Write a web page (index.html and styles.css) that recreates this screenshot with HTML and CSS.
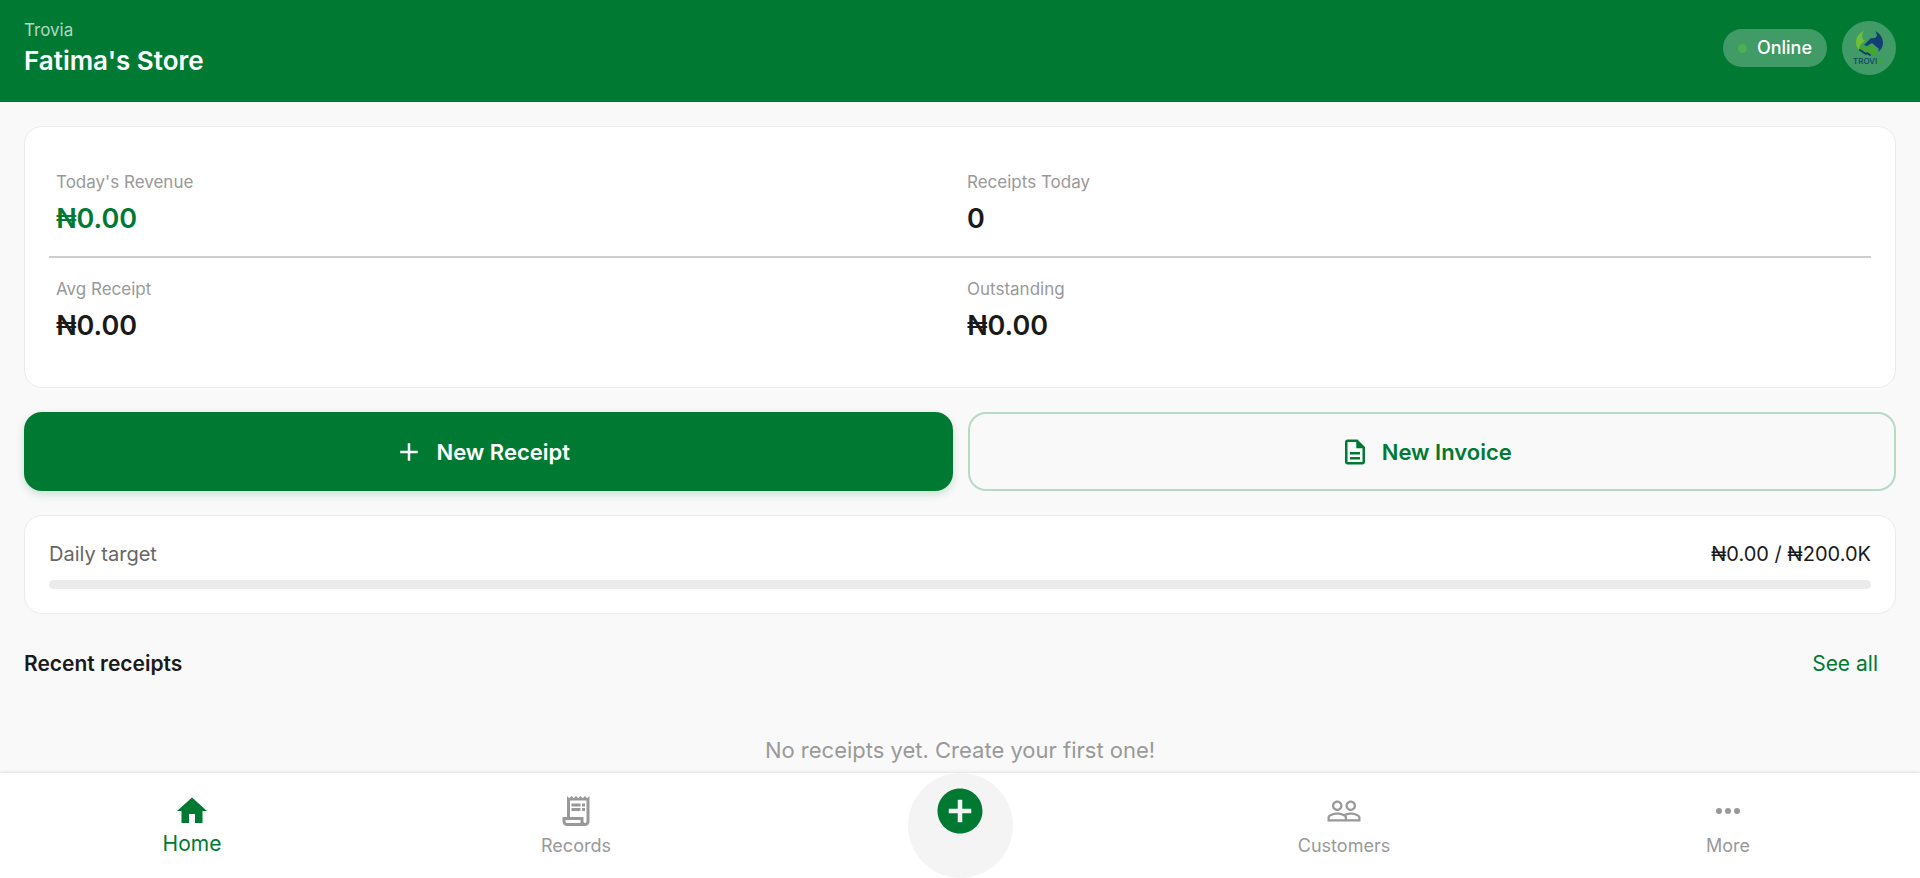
FILE: index.html
```html
<!DOCTYPE html>
<html lang="en">
<head>
  <meta charset="UTF-8">
  <meta name="viewport" content="width=device-width, initial-scale=1">
  <title>Trovia - Fatima's Store</title>
  <link rel="stylesheet" href="styles.css">
</head>
<body>
  <header class="header">
    <div>
      <div class="brand">Trovia</div>
      <h1 class="store-name">Fatima's Store</h1>
    </div>
    <div class="header-right">
      <div class="status"><span class="status-dot"></span>Online</div>
      <button class="avatar" aria-label="Profile">
        <svg viewBox="0 0 54 54" width="54" height="54">
          <path d="M22 10c-5 2-8 6-8 11 0 6 3 9 6 11l5-1 4 4c4-1 6-3 7-6l-7-5-5 2c-3 1-5-1-3-3l3-3c-5-1-6-6-2-10z" fill="#43a532"/>
          <path d="M22 10c-5 2-8 6-8 11 0 4 1 6 3 8 0-4 2-7 6-9-3-2-4-6-1-10z" fill="#6fbe3c"/>
          <path d="M33 10c5 2 8 7 8 12 0 4-2 7-5 9l1-3-7-6-5 3-3-1 7-7c5 1 8-2 4-7z" fill="#123f73"/>
          <path d="M18 29l3 2M21 31l3 2M25 32l3 2" stroke="#123f73" stroke-width="2" stroke-linecap="round"/>
          <text class="logo-text" x="11" y="43">TROVI<tspan fill="#43a532">A</tspan></text>
        </svg>
      </button>
    </div>
  </header>

  <main class="content">
    <section class="card stats">
      <div class="stats-row">
        <div class="stat">
          <div class="stat-label">Today's Revenue</div>
          <div class="stat-value green">₦0.00</div>
        </div>
        <div class="stat">
          <div class="stat-label">Receipts Today</div>
          <div class="stat-value">0</div>
        </div>
      </div>
      <div class="stats-row">
        <div class="stat">
          <div class="stat-label">Avg Receipt</div>
          <div class="stat-value">₦0.00</div>
        </div>
        <div class="stat">
          <div class="stat-label">Outstanding</div>
          <div class="stat-value">₦0.00</div>
        </div>
      </div>
    </section>

    <div class="actions">
      <button class="btn btn-primary">
        <svg viewBox="0 0 24 24" width="30" height="30"><path d="M19 13h-6v6h-2v-6H5v-2h6V5h2v6h6v2z"/></svg>
        New Receipt
      </button>
      <button class="btn btn-outline">
        <svg viewBox="0 0 24 24" width="30" height="30"><path d="M8 16h8v2H8zm0-4h8v2H8zm6-10H6c-1.1 0-2 .9-2 2v16c0 1.1.89 2 1.99 2H18c1.1 0 2-.9 2-2V8l-6-6zm4 18H6V4h7v5h5v11z"/></svg>
        New Invoice
      </button>
    </div>

    <section class="card target">
      <div class="target-row">
        <span class="target-label">Daily target</span>
        <span>₦0.00 / ₦200.0K</span>
      </div>
      <div class="progress"></div>
    </section>

    <div class="section-head">
      <h2 class="section-title">Recent receipts</h2>
      <a class="see-all" href="#">See all</a>
    </div>
    <p class="empty">No receipts yet. Create your first one!</p>
  </main>

  <nav class="nav">
    <a class="nav-item active" href="#">
      <svg viewBox="0 0 24 24" width="36" height="36"><path d="M10 20v-6h4v6h5v-8h3L12 3 2 12h3v8z"/></svg>
      Home
    </a>
    <a class="nav-item" href="#">
      <svg viewBox="0 0 24 24" width="36" height="36"><path d="M19.5 3.5L18 2l-1.5 1.5L15 2l-1.5 1.5L12 2l-1.5 1.5L9 2 7.5 3.5 6 2v14H3v3c0 1.66 1.34 3 3 3h12c1.66 0 3-1.34 3-3V2l-1.5 1.5zM15 20H6c-.55 0-1-.45-1-1v-1h10v2zm4-1c0 .55-.45 1-1 1s-1-.45-1-1v-3H8V5h11v14zM9 7h6v2H9zM16 7h2v2h-2zM9 10h6v2H9zM16 10h2v2h-2z"/></svg>
      Records
    </a>
    <button class="nav-add" aria-label="Create">
      <svg viewBox="0 0 24 24" width="54" height="54"><path d="M12 2C6.48 2 2 6.48 2 12s4.48 10 10 10 10-4.48 10-10S17.52 2 12 2zm5 11h-4v4h-2v-4H7v-2h4V7h2v4h4v2z"/></svg>
    </button>
    <a class="nav-item" href="#">
      <svg viewBox="0 0 24 24" width="36" height="36"><path d="M16.5 13c-1.2 0-3.07.34-4.5 1-1.43-.67-3.3-1-4.5-1C5.33 13 1 14.08 1 16.25V19h22v-2.75c0-2.17-4.33-3.25-6.5-3.25zm-4 4.5h-10v-1.25c0-.54 2.56-1.75 5-1.75s5 1.21 5 1.75v1.25zm9 0H14v-1.25c0-.46-.2-.86-.52-1.22.88-.3 1.96-.53 3.02-.53 2.44 0 5 1.21 5 1.75v1.25zM7.5 12c1.93 0 3.5-1.57 3.5-3.5S9.43 5 7.5 5 4 6.57 4 8.5 5.57 12 7.5 12zm0-5.5c1.1 0 2 .9 2 2s-.9 2-2 2-2-.9-2-2 .9-2 2-2zm9 5.5c1.93 0 3.5-1.57 3.5-3.5S18.43 5 16.5 5 13 6.57 13 8.5s1.57 3.5 3.5 3.5zm0-5.5c1.1 0 2 .9 2 2s-.9 2-2 2-2-.9-2-2 .9-2 2-2z"/></svg>
      Customers
    </a>
    <a class="nav-item" href="#">
      <svg viewBox="0 0 24 24" width="36" height="36"><circle cx="6" cy="12" r="2"/><circle cx="12" cy="12" r="2"/><circle cx="18" cy="12" r="2"/></svg>
      More
    </a>
  </nav>
</body>
</html>
```
FILE: styles.css
```css
* { box-sizing: border-box; }
body {
  margin: 0;
  height: 100vh;
  display: flex;
  flex-direction: column;
  font-family: Inter, sans-serif;
  background: #f9f9f9;
  color: #1a1a1a;
}
h1, h2, p { margin: 0; }
button { font-family: inherit; border: none; cursor: pointer; }
a { text-decoration: none; }
svg { fill: currentColor; display: block; }

.header {
  display: flex;
  justify-content: space-between;
  align-items: center;
  padding: 17px 24px 23px;
  background: #007a33;
  color: #fff;
}
.brand { font-size: 17px; line-height: 26px; color: #b2d7c1; }
.store-name { font-size: 26px; line-height: 36px; font-weight: 600; }
.header-right { display: flex; align-items: center; gap: 15px; }
.status {
  display: flex;
  align-items: center;
  gap: 10px;
  padding: 7px 15px;
  border-radius: 20px;
  background: #409b66;
  font-size: 18px;
  line-height: 24px;
  font-weight: 500;
}
.status-dot {
  width: 9px;
  height: 9px;
  border-radius: 50%;
  background: #4caf50;
}
.avatar {
  padding: 0;
  border-radius: 50%;
  background: #409b66;
}
.logo-text { font-size: 8px; font-weight: 500; fill: #123f73; }

.content {
  flex: 1;
  min-height: 0;
  overflow: hidden;
  display: flex;
  flex-direction: column;
  gap: 24px;
  padding: 24px 24px 0;
}
.card {
  background: #fff;
  border: 1px solid #ebebeb;
  border-radius: 18px;
  padding: 24px;
}
.stats-row {
  display: grid;
  grid-template-columns: 1fr 1fr;
  padding: 19px 0;
}
.stats-row + .stats-row { border-top: 2px solid #cdd0cd; }
.stat { padding: 0 7px; }
.stat-label { font-size: 17px; line-height: 24px; color: #999; margin-bottom: 7px; }
.stat-value { font-size: 27px; line-height: 36px; font-weight: 600; }
.green { color: #007a33; }

.actions {
  display: grid;
  grid-template-columns: 1fr 1fr;
  gap: 15px;
}
.btn {
  display: flex;
  justify-content: center;
  align-items: center;
  gap: 12px;
  height: 79px;
  padding: 0 18px 0 6px;
  border-radius: 18px;
  font-size: 22px;
  font-weight: 600;
}
.btn-primary {
  background: #007a33;
  color: #fff;
  box-shadow: 0 3px 8px rgba(0, 122, 51, 0.2);
}
.btn-outline {
  background: transparent;
  color: #007a33;
  border: 2px solid #b6dac5;
}

.target-row {
  display: flex;
  justify-content: space-between;
  font-size: 20px;
  line-height: 28px;
  margin-bottom: 12px;
}
.target-label { color: #666; }
.progress { height: 9px; border-radius: 5px; background: #ebebeb; }

.section-head {
  display: flex;
  justify-content: space-between;
  align-items: center;
  padding: 11px 18px 0 0;
}
.section-title { font-size: 21px; line-height: 30px; font-weight: 600; }
.see-all { font-size: 21px; line-height: 30px; color: #007a33; }
.empty {
  padding-top: 32px;
  font-size: 22px;
  line-height: 30px;
  text-align: center;
  color: #999;
}

.nav {
  display: grid;
  grid-template-columns: repeat(5, 1fr);
  background: #fff;
  box-shadow: 0 -1px 3px rgba(0, 0, 0, 0.1);
}
.nav-item {
  display: flex;
  flex-direction: column;
  align-items: center;
  gap: 4px;
  padding-top: 20px;
  font-size: 18px;
  line-height: 26px;
  color: #999;
}
.nav-item.active { font-size: 21px; line-height: 22px; color: #007a33; }
.nav-add {
  justify-self: center;
  display: flex;
  justify-content: center;
  align-items: flex-start;
  width: 105px;
  height: 105px;
  padding: 11px 0 0;
  border-radius: 50%;
  background: #f4f4f4;
  color: #007a33;
}
```
